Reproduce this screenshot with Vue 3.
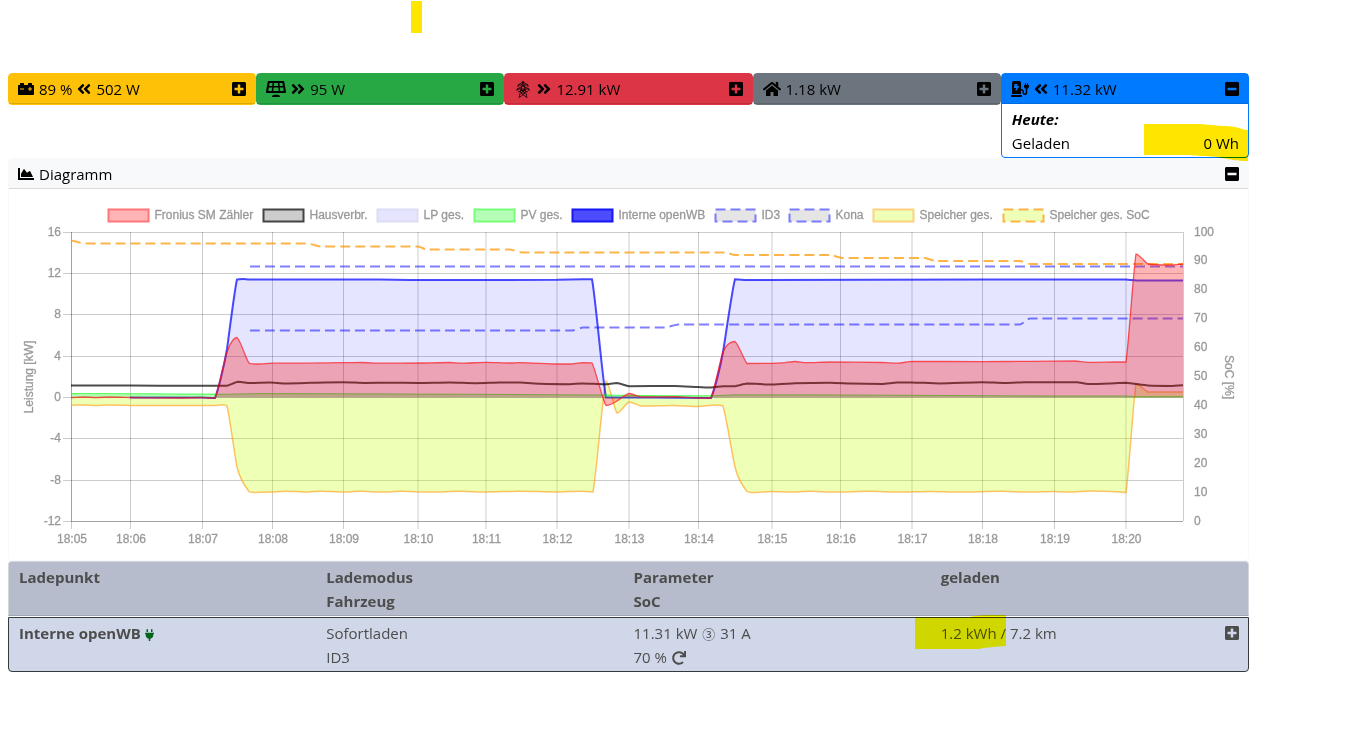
<script setup>
const paths = {
  plus: 'M400 32H48C21.5 32 0 53.5 0 80v352c0 26.5 21.5 48 48 48h352c26.5 0 48-21.5 48-48V80c0-26.5-21.5-48-48-48zm-32 252c0 6.6-5.4 12-12 12h-92v92c0 6.6-5.4 12-12 12h-56c-6.6 0-12-5.4-12-12v-92H92c-6.6 0-12-5.4-12-12v-56c0-6.6 5.4-12 12-12h92v-92c0-6.6 5.4-12 12-12h56c6.6 0 12 5.4 12 12v92h92c6.6 0 12 5.4 12 12v56z',
  minus: 'M400 32H48C21.5 32 0 53.5 0 80v352c0 26.5 21.5 48 48 48h352c26.5 0 48-21.5 48-48V80c0-26.5-21.5-48-48-48zM92 296c-6.6 0-12-5.4-12-12v-56c0-6.6 5.4-12 12-12h264c6.6 0 12 5.4 12 12v56c0 6.6-5.4 12-12 12H92z',
  right: 'M224.3 273l-136 136c-9.4 9.4-24.6 9.4-33.9 0l-22.6-22.6c-9.4-9.4-9.4-24.6 0-33.9l96.4-96.4-96.4-96.4c-9.4-9.4-9.4-24.6 0-33.9L54.3 103c9.4-9.4 24.6-9.4 33.9 0l136 136c9.5 9.4 9.5 24.6.1 34zm192-34l-136-136c-9.4-9.4-24.6-9.4-33.9 0l-22.6 22.6c-9.4 9.4-9.4 24.6 0 33.9l96.4 96.4-96.4 96.4c-9.4 9.4-9.4 24.6 0 33.9l22.6 22.6c9.4 9.4 24.6 9.4 33.9 0l136-136c9.4-9.2 9.4-24.4 0-33.8z',
  left: 'M223.7 239l136-136c9.4-9.4 24.6-9.4 33.9 0l22.6 22.6c9.4 9.4 9.4 24.6 0 33.9L319.9 256l96.4 96.4c9.4 9.4 9.4 24.6 0 33.9L393.7 409c-9.4 9.4-24.6 9.4-33.9 0l-136-136c-9.5-9.4-9.5-24.6-.1-34zm-192 34l136 136c9.4 9.4 24.6 9.4 33.9 0l22.6-22.6c9.4-9.4 9.4-24.6 0-33.9L127.9 256l96.4-96.4c9.4-9.4 9.4-24.6 0-33.9L201.7 103c-9.4-9.4-24.6-9.4-33.9 0l-136 136c-9.5 9.4-9.5 24.6-.1 34z',
  battery: 'M480 128h-32V80c0-8.84-7.16-16-16-16h-96c-8.84 0-16 7.16-16 16v48H192V80c0-8.84-7.16-16-16-16H80c-8.84 0-16 7.16-16 16v48H32c-17.67 0-32 14.33-32 32v256c0 17.67 14.33 32 32 32h448c17.67 0 32-14.33 32-32V160c0-17.67-14.33-32-32-32zM192 264c0 4.42-3.58 8-8 8H72c-4.42 0-8-3.58-8-8v-16c0-4.42 3.58-8 8-8h112c4.42 0 8 3.58 8 8v16zm256 0c0 4.42-3.58 8-8 8h-40v40c0 4.42-3.58 8-8 8h-16c-4.42 0-8-3.58-8-8v-40h-40c-4.42 0-8-3.58-8-8v-16c0-4.42 3.58-8 8-8h40v-40c0-4.42 3.58-8 8-8h16c4.42 0 8 3.58 8 8v40h40c4.42 0 8 3.58 8 8v16z',
  solar: 'M260 438h120l64 34v40H196v-40zM585.2 26.74C582.58 11.31 568.99 0 553.06 0H86.93C71 0 57.41 11.31 54.79 26.74-3.32 369.16.04 348.08.03 352c-.03 17.32 14.29 32 32.6 32h574.74c18.23 0 32.51-14.56 32.59-31.79.02-4.08 3.35 16.95-54.76-325.47zM259.83 64h120.33l9.77 96H250.06l9.77-96zm-75.17 256H71.09L90.1 208h105.97l-11.41 112zm16.29-160H98.24l16.29-96h96.19l-9.77 96zm32.82 160l11.4-112h149.65l11.4 112H233.77zm195.5-256h96.19l16.29 96H439.04l-9.77-96zm26.06 256l-11.4-112H549.9l19.01 112H455.33z',
  home: 'M280.37 148.26L96 300.11V464a16 16 0 0 0 16 16l112.06-.29a16 16 0 0 0 15.92-16V368a16 16 0 0 1 16-16h64a16 16 0 0 1 16 16v95.64a16 16 0 0 0 16 16.05L464 480a16 16 0 0 0 16-16V300L295.67 148.26a12.19 12.19 0 0 0-15.3 0zM571.6 251.47L488 182.56V44.05a12 12 0 0 0-12-12h-56a12 12 0 0 0-12 12v72.61L318.47 43a48 48 0 0 0-61 0L4.34 251.47a12 12 0 0 0-1.6 16.9l25.5 31A12 12 0 0 0 45.15 301l235.22-193.74a12.19 12.19 0 0 1 15.3 0L530.9 301a12 12 0 0 0 16.9-1.6l25.5-31a12 12 0 0 0-1.7-16.93z',
  station: 'M336 448H16c-8.84 0-16 7.16-16 16v32c0 8.84 7.16 16 16 16h320c8.84 0 16-7.16 16-16v-32c0-8.84-7.16-16-16-16zm208-320V80c0-8.84-7.16-16-16-16s-16 7.16-16 16v48h-32V80c0-8.84-7.16-16-16-16s-16 7.16-16 16v48h-16c-8.84 0-16 7.16-16 16v32c0 35.76 23.62 65.69 56 75.93v118.49c0 13.95-9.5 26.92-23.26 29.19C431.22 402.5 416 388.99 416 372v-28c0-48.6-39.4-88-88-88h-8V64c0-35.35-28.65-64-64-64H96C60.65 0 32 28.65 32 64v352h288V304h8c22.09 0 40 17.91 40 40v24.61c0 39.67 28.92 75.16 68.41 79.01C481.71 452.05 520 416.41 520 372V251.93c32.38-10.24 56-40.17 56-75.93v-32c0-8.84-7.16-16-16-16h-16zm-283.91 47.76l-93.7 139c-2.2 3.33-6.21 5.24-10.39 5.24-7.67 0-13.47-6.28-11.67-12.92L167.35 224H108c-7.25 0-12.85-5.59-11.89-11.89l16-107C112.9 99.9 117.98 96 124 96h68c7.88 0 13.62 6.54 11.6 13.21L192 160h57.7c9.24 0 15.01 8.78 10.39 15.76z',
  area: 'M500 384c6.6 0 12 5.4 12 12v40c0 6.6-5.4 12-12 12H12c-6.6 0-12-5.4-12-12V76c0-6.6 5.4-12 12-12h40c6.6 0 12 5.4 12 12v308h436zM372.7 159.5L288 216l-85.3-113.7c-5.1-6.8-15.5-6.3-19.9 1L96 248v104h384l-89.9-187.8c-3.2-6.5-11.4-8.7-17.4-4.7z',
  plug: 'M320,32a32,32,0,0,0-64,0v96h64Zm48,128H16A16,16,0,0,0,0,176v32a16,16,0,0,0,16,16H32v32A160.07,160.07,0,0,0,160,412.8V512h64V412.8A160.07,160.07,0,0,0,352,256V224h16a16,16,0,0,0,16-16V176A16,16,0,0,0,368,160ZM128,32a32,32,0,0,0-64,0v96h64Z',
  redo: 'M500.33 0h-47.41a12 12 0 0 0-12 12.57l4 82.76A247.42 247.42 0 0 0 256 8C119.34 8 7.9 119.53 8 256.19 8.1 393.07 119.1 504 256 504a247.1 247.1 0 0 0 166.18-63.91 12 12 0 0 0 .48-17.43l-34-34a12 12 0 0 0-16.38-.55A176 176 0 1 1 402.1 157.8l-101.53-4.87a12 12 0 0 0-12.57 12v47.41a12 12 0 0 0 12 12h200.33a12 12 0 0 0 12-12V12a12 12 0 0 0-12-12z'
}

const cards = [
  { tone: 'amber', icon: 'battery', box: '0 0 512 512', size: 'w16', pre: '89 %', dir: 'left', value: '502 W' },
  { tone: 'green', icon: 'solar', box: '0 0 640 512', size: 'w20', dir: 'right', value: '95 W' },
  { tone: 'red', icon: 'pylon', dir: 'right', value: '12.91 kW' },
  { tone: 'grey', icon: 'home', box: '0 0 576 512', size: 'w18', value: '1.18 kW' },
  { tone: 'blue', icon: 'station', box: '0 0 576 512', size: 'w18', dir: 'left', value: '11.32 kW', open: true }
]

const legend = [
  { x: 108, label: 'Fronius SM Zähler', c: 'evu' },
  { x: 263, label: 'Hausverbr.', c: 'house' },
  { x: 377, label: 'LP ges.', c: 'lp' },
  { x: 474, label: 'PV ges.', c: 'pv' },
  { x: 572, label: 'Interne openWB', c: 'owb' },
  { x: 715, label: 'ID3', c: 'car' },
  { x: 789, label: 'Kona', c: 'car' },
  { x: 873, label: 'Speicher ges.', c: 'bat' },
  { x: 1003, label: 'Speicher ges. SoC', c: 'soc' }
]

const yTicks = [[16, 232.5], [12, 273.5], [8, 314.5], [4, 356.5], [0, 397.5], [-4, 438.5], [-8, 480.5], [-12, 521.5]]
const xPos = [71.5, 130.5, 202.5, 272.5, 343.5, 418, 486, 557, 629, 698.5, 772, 840.5, 912, 982.5, 1054.5, 1126]
const xTicks = xPos.map((x, i) => ({ x, label: '18:' + String(5 + i).padStart(2, '0') }))
const socTicks = Array.from({ length: 11 }, (_, i) => ({ v: 100 - i * 10, y: 232.5 + i * 28.9 }))

// Cubic segments whose control points never leave the range of their end points.
const lineOf = (pts, t = 0.15) => {
  let d = `M${pts[0][0]} ${pts[0][1]}`
  for (let i = 0; i < pts.length - 1; i++) {
    const a = pts[i], b = pts[i + 1]
    const p = pts[i - 1] || a, n = pts[i + 2] || b
    const w = b[0] - a[0]
    const lo = Math.min(a[1], b[1]), hi = Math.max(a[1], b[1])
    const fit = (y) => Math.min(hi, Math.max(lo, y))
    const y1 = fit(a[1] + (b[1] - p[1]) * t)
    const y2 = fit(b[1] - (n[1] - a[1]) * t)
    d += `C${a[0] + w * 0.25} ${y1} ${b[0] - w * 0.25} ${y2} ${b[0]} ${b[1]}`
  }
  return d
}
const areaOf = (pts) => `${lineOf(pts)}L${pts[pts.length - 1][0]} 397.5L${pts[0][0]} 397.5Z`

const evu = [[71, 397.5], [84, 397], [96, 397.5], [109, 397], [130, 397.5], [178, 398], [202, 397.5], [209, 398], [215, 398], [227, 352], [237, 337.5], [249, 363], [256, 364], [272, 363.2], [305, 363.2], [343, 362.7], [362, 362.5], [380, 363.2], [420, 363], [450, 362.5], [462, 363.2], [486, 362.3], [510, 363], [520, 362.6], [557, 364], [570, 364], [583, 362.6], [592, 363], [606, 405.5], [617, 401], [629, 393.5], [641, 397], [676, 396.6], [698, 398], [711, 398], [723, 352], [735, 341.5], [747, 363.5], [772, 363.3], [785, 362.6], [795, 361.5], [806, 362.6], [830, 362], [882, 362.5], [897, 363.2], [912, 361.4], [982, 361.6], [1030, 361.3], [1075, 361], [1088, 362.4], [1115, 362], [1126, 362], [1136, 254], [1148, 264], [1172, 265], [1183, 264]]
const charge = [[130, 397.5], [202, 397.5], [215, 398], [227, 349], [237, 279.5], [243, 279], [249, 279.6], [320, 279.5], [380, 279.5], [410, 280], [557, 279.8], [583, 279.2], [592, 279.3], [606, 397.5], [650, 397.5], [711, 398], [723, 352], [735, 279.3], [747, 280], [982, 279.6], [1040, 279.6], [1126, 279.6], [1137, 280.6], [1183, 280.4]]
const house = [[71, 385.5], [130, 385.6], [190, 385.8], [227, 385.7], [238, 381.8], [250, 383], [270, 382.6], [285, 383.4], [310, 382.8], [343, 382.2], [365, 383], [390, 382.7], [418, 383], [450, 382.4], [475, 383.2], [500, 382.6], [520, 382.6], [540, 383.8], [570, 384.2], [582, 383.4], [605, 384.3], [617, 383], [629, 386.2], [675, 386], [698, 387], [711, 387.6], [723, 386.2], [735, 386.2], [747, 383.6], [772, 384.5], [795, 383.3], [830, 382.8], [850, 383.6], [882, 384], [897, 382.4], [912, 382.4], [940, 383.4], [982, 382.2], [1005, 383], [1025, 382.2], [1077, 382.2], [1088, 384], [1110, 383.5], [1126, 382.8], [1148, 385.6], [1172, 386], [1183, 385.2]]
const pv = [[71, 393.6], [140, 393.8], [227, 394.2], [260, 393.6], [500, 394.4], [605, 395], [630, 395.5], [711, 395.8], [735, 394.8], [840, 395], [1054, 396], [1126, 396], [1136, 396.7], [1183, 396.7]]
const bat = [[71, 405.2], [84, 405], [96, 405.5], [109, 405], [135, 405.5], [215, 405.5], [222, 404.8], [227, 406], [237, 467], [249, 491.5], [254, 492.4], [272, 492], [285, 491.2], [308, 492], [320, 491.2], [343, 492], [360, 491.3], [384, 492], [400, 491.3], [430, 492], [460, 491.3], [486, 492], [520, 491.2], [557, 492], [580, 491.2], [593, 492], [606, 381], [617, 413], [629, 402], [641, 406], [675, 405.4], [698, 406.4], [715, 405], [723, 406], [735, 467], [747, 491.5], [752, 492.4], [772, 491.4], [790, 492], [810, 491.3], [835, 492], [870, 491.3], [900, 492], [930, 491.4], [960, 492], [1000, 491.3], [1030, 492], [1054, 491.4], [1070, 492], [1090, 491], [1112, 491.4], [1126, 492.5], [1136, 384], [1148, 392], [1183, 392]]
const soc = [[71, 240.5], [84, 243.5], [307, 243.5], [321, 246.5], [418, 246.5], [427, 249.5], [509, 249.5], [523, 252.5], [725, 252.5], [735, 255], [830, 255], [842, 258], [925, 258], [935, 261], [1020, 261], [1030, 264], [1183, 264]]
const id3 = [[250, 330.5], [572, 330.5], [583, 327.5], [665, 327.5], [678, 324.5], [1020, 324.5], [1030, 318.5], [1183, 318.5]]
</script>

<template>
  <main class="page">
    <span class="marker"></span>

    <section class="cards">
      <article v-for="c in cards" :key="c.tone" class="card" :class="[c.tone, { open: c.open }]">
        <header class="head">
          <div class="sum">
            <svg v-if="c.icon === 'pylon'" class="icon pylon" viewBox="0 0 16 18" aria-hidden="true">
              <path class="wire" d="M4 18L7 5L8 1L9 5L12 18M3 5L8 2L13 5M3 5H13M3 5V7M13 5V7M2 9L8 6L14 9M2 9H14M2 9V11M14 9V11M3 12L8 10L13 12M6 9L10 13L5 17M10 9L6 13L11 17M6 13H10" />
            </svg>
            <svg v-else class="icon" :class="c.size" :viewBox="c.box" aria-hidden="true"><path :d="paths[c.icon]" /></svg>
            <span v-if="c.pre">{{ c.pre }}</span>
            <svg v-if="c.dir" class="icon w14" viewBox="0 0 448 512" aria-hidden="true"><path :d="paths[c.dir]" /></svg>
            <span>{{ c.value }}</span>
          </div>
          <button type="button" class="toggle" aria-label="Details">
            <svg class="icon w14" viewBox="0 0 448 512" aria-hidden="true"><path :d="c.open ? paths.minus : paths.plus" /></svg>
          </button>
        </header>
        <div v-if="c.open" class="body">
          <div class="today">Heute:</div>
          <div class="pair"><span>Geladen</span><span>0 Wh</span></div>
          <svg class="swipe" viewBox="0 0 104 38" aria-hidden="true"><path d="M0 1H50C65 1 70 3 82 3C93 3 98 7 104 7V38C92 38 86 36 78 35C65 32 52 34 46 32H0Z" /></svg>
        </div>
      </article>
    </section>

    <section class="panel">
      <header class="head">
        <h2 class="sum title">
          <svg class="icon w16" viewBox="0 0 512 512" aria-hidden="true"><path :d="paths.area" /></svg>
          <span>Diagramm</span>
        </h2>
        <button type="button" class="toggle" aria-label="Diagramm ausblenden">
          <svg class="icon w14" viewBox="0 0 448 512" aria-hidden="true"><path :d="paths.minus" /></svg>
        </button>
      </header>
      <svg class="chart" viewBox="9 189 1239 371" role="img" aria-label="Leistung und SoC">
        <g v-for="l in legend" :key="l.label">
          <rect :x="l.x + 0.5" y="209.500" width="40" height="12" class="key" :class="['k-' + l.c]" />
          <text :x="l.x + 46.5" y="219">{{ l.label }}</text>
        </g>

        <g class="grid">
          <path v-for="[v, y] in yTicks" :key="v" :d="`M63 ${y}H1183`" />
          <path v-for="t in xTicks" :key="t.label" :d="`M${t.x} 232V529`" />
          <path d="M1183.500 232V521" />
          <path d="M71.500 232V521M71 521.500H1183" />
        </g>

        <path class="f-bat" :d="areaOf(bat)" />
        <path class="l-soc" :d="lineOf(soc, 0.05)" />
        <path class="l-bat" :d="lineOf(bat)" />
        <path class="l-car" d="M250 266.500H1183" />
        <path class="l-car" :d="lineOf(id3, 0.05)" />
        <path class="l-owb" :d="lineOf(charge)" />
        <path class="f-pv" :d="areaOf(pv)" />
        <path class="l-pv" :d="lineOf(pv)" />
        <path class="f-lp" :d="areaOf(charge)" />
        <path class="l-house" :d="lineOf(house)" />
        <path class="f-evu" :d="areaOf(evu)" />
        <path class="l-evu" :d="lineOf(evu)" />

        <text v-for="[v, y] in yTicks" :key="'y' + v" x="61" :y="y + 3" text-anchor="end">{{ v }}</text>
        <text v-for="t in socTicks" :key="'s' + t.v" x="1194" :y="t.y + 3">{{ t.v }}</text>
        <text v-for="t in xTicks" :key="'x' + t.label" :x="t.x + 0.5" y="543" text-anchor="middle">{{ t.label }}</text>
        <text transform="translate(33 377) rotate(-90)" text-anchor="middle">Leistung [kW]</text>
        <text transform="translate(1225 377) rotate(90)" text-anchor="middle">SoC [%]</text>
      </svg>
    </section>

    <table class="points">
      <thead>
        <tr>
          <th>Ladepunkt</th>
          <th>Lademodus<br />Fahrzeug</th>
          <th>Parameter<br />SoC</th>
          <th>geladen</th>
        </tr>
      </thead>
      <tbody>
        <tr>
          <td class="name">
            Interne openWB
            <svg class="icon plug" viewBox="0 0 384 512" aria-hidden="true"><path :d="paths.plug" /></svg>
          </td>
          <td>Sofortladen<br />ID3</td>
          <td>
            11.31 kW <span class="phase">③</span> 31 A<br />70 %
            <button type="button" class="reload" aria-label="SoC aktualisieren">
              <svg class="icon" viewBox="0 0 512 512" aria-hidden="true"><path :d="paths.redo" /></svg>
            </button>
          </td>
          <td class="last">
            <span>1.2 kWh / 7.2 km</span>
            <button type="button" class="toggle" aria-label="Details">
              <svg class="icon w14" viewBox="0 0 448 512" aria-hidden="true"><path :d="paths.plus" /></svg>
            </button>
            <svg class="swipe" viewBox="0 0 91 34" aria-hidden="true"><path d="M0 2H54C62 0 70 0 91 0V31C80 32 72 32 64 34H0Z" /></svg>
          </td>
        </tr>
      </tbody>
    </table>
  </main>
</template>

<style>
body {
  margin: 0;
  background: #fff;
}
</style>

<style scoped>
* {
  box-sizing: border-box;
}
.page {
  position: relative;
  padding: 73px 113px 56px 8px;
  font-family: "Open Sans", "Noto Sans", sans-serif;
  font-size: 15px;
  line-height: 24px;
  color: #000;
}
.marker {
  position: absolute;
  left: 411px;
  top: 1px;
  width: 11px;
  height: 32px;
  background: #ffe600;
}
.cards {
  display: grid;
  grid-template-columns: repeat(5, 1fr);
  align-items: start;
}
.card {
  border: 1px solid;
  border-radius: 4px;
  background: #fff;
}
.head {
  display: flex;
  align-items: center;
  justify-content: space-between;
  padding: 3px 9px 2px;
  border-bottom: 1px solid rgba(0, 0, 0, 0.125);
}
.amber { border-color: #ffc107; }
.amber .head { background: #ffc107; }
.green { border-color: #28a745; }
.green .head { background: #28a745; }
.red { border-color: #dc3545; }
.red .head { background: #dc3545; }
.grey { border-color: #6c757d; }
.grey .head { background: #6c757d; }
.blue { border-color: #007bff; }
.blue .head { background: #007bff; }
.sum {
  display: flex;
  align-items: center;
  gap: 5px;
}
.title {
  margin: 0;
  font-size: 15px;
  font-weight: 400;
}
.icon {
  display: block;
  flex: none;
  height: 16px;
  fill: currentColor;
}
.w14 { width: 14px; }
.w16 { width: 16px; }
.w18 { width: 18px; }
.w20 { width: 20px; }
.pylon {
  width: 18px;
  height: 18px;
}
.wire {
  fill: none;
  stroke: #000;
  stroke-width: 0.8;
}
.toggle,
.reload {
  padding: 0;
  border: 0;
  background: none;
  color: inherit;
  cursor: pointer;
}
.body {
  position: relative;
  padding: 3px 9px 2px 10px;
}
.today {
  font-weight: 700;
  font-style: italic;
}
.pair {
  display: flex;
  justify-content: space-between;
}
.swipe {
  position: absolute;
  fill: #ffe600;
  mix-blend-mode: multiply;
  pointer-events: none;
}
.body .swipe {
  right: 0;
  top: 19px;
  width: 104px;
  height: 38px;
}
.panel {
  border: 1px solid #f8f9fa;
  border-radius: 4px;
}
.panel .head {
  background: #f8f9fa;
}
.chart {
  display: block;
  width: 100%;
  height: auto;
}
.chart text {
  font-family: "Liberation Sans", Arial, sans-serif;
  font-size: 12px;
  fill: #999;
  stroke: #999;
  stroke-width: 0.3px;
}
.chart path {
  fill: none;
  stroke: none;
}
.chart .grid path {
  stroke: rgba(0, 0, 0, 0.2);
}
.key { stroke-width: 2; }
.k-evu { fill: #ffb5b6; stroke: #ff7678; }
.k-house { fill: #ccc; stroke: #444; }
.k-lp { fill: #e5e5ff; stroke: #dcdcf5; }
.k-pv { fill: #b5ffb6; stroke: #78ff7a; }
.k-owb { fill: #4d4dff; stroke: #1717f5; }
.k-car { fill: #e5e5e5; stroke: #7a7aff; stroke-dasharray: 10 5; }
.k-bat { fill: #eeffb6; stroke: #ffd080; }
.k-soc { fill: #eeffb6; stroke: #ffb347; stroke-dasharray: 10 5; }
.chart .f-bat { fill: rgba(200, 255, 13, 0.3); }
.chart .f-pv { fill: rgba(10, 255, 13, 0.3); }
.chart .f-lp { fill: rgba(0, 0, 255, 0.1); }
.chart .f-evu { fill: rgba(255, 10, 13, 0.3); }
.chart .l-bat { stroke: rgba(255, 155, 13, 0.6); stroke-width: 1.5; }
.chart .l-soc { stroke: rgba(255, 155, 13, 0.75); stroke-width: 2; stroke-dasharray: 10 5; }
.chart .l-car { stroke: rgba(0, 0, 255, 0.5); stroke-width: 2; stroke-dasharray: 10 5; }
.chart .l-owb { stroke: rgba(0, 0, 255, 0.7); stroke-width: 2; }
.chart .l-pv { stroke: rgba(10, 255, 13, 0.7); stroke-width: 1; }
.chart .l-house { stroke: rgba(0, 0, 0, 0.7); stroke-width: 2; }
.chart .l-evu { stroke: rgba(255, 10, 13, 0.65); stroke-width: 1.3; }
.points {
  display: block;
  color: #4d4d4d;
}
.points thead,
.points tbody {
  display: block;
}
.points tr {
  display: grid;
  grid-template-columns: repeat(4, 1fr);
  padding: 3px 0 2px 10px;
}
.points th,
.points td {
  padding: 0;
  text-align: left;
}
.points thead tr {
  background: #b6bccb;
  border: 1px solid #d3d6dd;
  border-bottom-color: #9fa5b2;
  border-radius: 4px 4px 0 0;
  margin-bottom: 1px;
}
.points tbody tr {
  background: #d0d7e8;
  border: 1px solid #343a40;
  border-radius: 0 0 4px 4px;
}
.name {
  font-weight: 700;
}
.plug {
  display: inline-block;
  width: 9px;
  height: 12px;
  color: #00661a;
  vertical-align: -2px;
}
.phase {
  margin: 0 1px;
  font-family: "Noto Sans CJK SC", "DejaVu Sans", sans-serif;
  font-size: 13px;
  line-height: 16px;
}
.reload {
  width: 14px;
  height: 14px;
  margin-left: 1px;
  vertical-align: -2px;
}
.reload .icon {
  width: 14px;
  height: 14px;
}
.last {
  position: relative;
  display: flex;
  justify-content: space-between;
  align-items: flex-start;
}
.points .last {
  padding-right: 9px;
}
.last .toggle {
  padding-top: 4px;
}
.last .swipe {
  left: -26px;
  top: -6px;
  width: 91px;
  height: 34px;
  fill: #ff0;
}
</style>
